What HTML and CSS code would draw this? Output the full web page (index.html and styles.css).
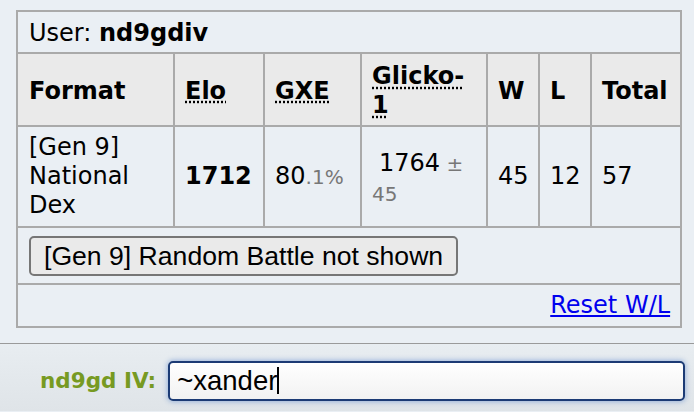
FILE: index.html
```html
<!DOCTYPE html>
<html>
<head>
<meta charset="utf-8">
<link rel="stylesheet" href="styles.css">
</head>
<body>
<div class="log">
  <table class="ladder">
    <colgroup>
      <col class="c-format">
      <col class="c-elo">
      <col class="c-gxe">
      <col class="c-glicko">
      <col class="c-w">
      <col class="c-l">
      <col class="c-total">
    </colgroup>
    <tr class="user-row">
      <td colspan="7">User: <strong>nd9gdiv</strong></td>
    </tr>
    <tr class="head-row">
      <th>Format</th>
      <th><abbr title="Elo rating">Elo</abbr></th>
      <th><abbr title="user's percentage chance of winning a random battle">GXE</abbr></th>
      <th><abbr title="Glicko-1 rating system: rating±deviation">Glicko-1</abbr></th>
      <th>W</th>
      <th>L</th>
      <th>Total</th>
    </tr>
    <tr class="data-row">
      <td>[Gen 9] National Dex</td>
      <td><strong>1712</strong></td>
      <td>80<small>.1%</small></td>
      <td class="glicko">1764<small> ±</small> <small>45</small></td>
      <td>45</td>
      <td>12</td>
      <td>57</td>
    </tr>
    <tr class="btn-row">
      <td colspan="7"><div class="btn-wrap"><button class="format-btn">[Gen 9] Random Battle not shown</button></div></td>
    </tr>
    <tr class="reset-row">
      <td colspan="7"><a href="#" class="reset">Reset W/L</a></td>
    </tr>
  </table>
</div>
<div class="chatbar">
  <label class="name">nd9gd IV:</label>
  <div class="textbox">~xander<span class="caret"></span></div>
</div>
</body>
</html>
```
FILE: styles.css
```css
html, body {
  margin: 0;
  padding: 0;
}
body {
  width: 694px;
  height: 412px;
  overflow: hidden;
  background: #eaeff4;
  font-family: Verdana, "DejaVu Sans", sans-serif;
  color: #000;
}
.log {
  padding: 10px 0 15px 16px;
}
.ladder {
  box-sizing: border-box;
  width: 666px;
  table-layout: fixed;
  border-collapse: separate;
  border-spacing: 0;
  border-top: 2px solid #aaa;
  border-left: 2px solid #aaa;
  font-size: 24px;
  line-height: 29px;
}
.c-format { width: 157px; }
.c-elo { width: 90px; }
.c-gxe { width: 97px; }
.c-glicko { width: 126px; }
.c-w { width: 52px; }
.c-l { width: 52px; }
.c-total { width: 90px; }

.ladder td, .ladder th {
  border-right: 2px solid #aaa;
  border-bottom: 2px solid #aaa;
  padding: 6px 10px;
  text-align: left;
  vertical-align: middle;
  background: #eaeff4;
}
.ladder th {
  background: #eaeaea;
  font-weight: bold;
}
.user-row td {
  padding: 7px 11px 4px;
}
.head-row th {
  padding: 8px 10px 5px;
}
.head-row th:first-child,
.data-row td:first-child {
  padding-left: 11px;
}
abbr {
  text-decoration: underline dotted;
  text-underline-offset: 3px;
}
small {
  font-size: 20px;
  color: #777;
}
.glicko {
  text-indent: 7px;
}
.data-row td.glicko {
  padding-top: 8px;
  padding-bottom: 4px;
}
.btn-row td {
  padding: 8px 11px 7px;
}
.btn-wrap {
  display: flex;
}
.format-btn {
  height: 40px;
  padding: 0 13px;
  border: 2px solid #767676;
  border-radius: 5px;
  background: #eaeaea;
  font-family: "Liberation Sans", Arial, sans-serif;
  font-size: 26.6px;
  color: #000;
  line-height: 36px;
}
.reset-row td {
  text-align: right;
  padding: 6px 10px;
}
.reset {
  color: #0000ee;
  text-decoration: underline;
}
.chatbar {
  border-top: 1px solid #9a9a9a;
  height: 68px;
  box-sizing: border-box;
  padding: 17px 9px 11px 40px;
  background: linear-gradient(#e8edf1, #dfe4e8);
  display: flex;
  align-items: center;
  gap: 12px;
}
.name {
  color: #779a22;
  font-weight: bold;
  font-size: 21.5px;
  white-space: nowrap;
}
.textbox {
  flex: 1;
  height: 40px;
  box-sizing: border-box;
  border: 2px solid #1c3b75;
  border-radius: 5px;
  background: linear-gradient(#ffffff, #f2f2f2);
  box-shadow: 0 0 5px 1px rgba(70, 120, 200, 0.45);
  padding: 0 7px;
  font-family: "Liberation Sans", Arial, sans-serif;
  font-size: 27.5px;
  line-height: 36px;
  display: flex;
  align-items: center;
}
.caret {
  display: inline-block;
  width: 2px;
  height: 27px;
  background: #000;
}
```
